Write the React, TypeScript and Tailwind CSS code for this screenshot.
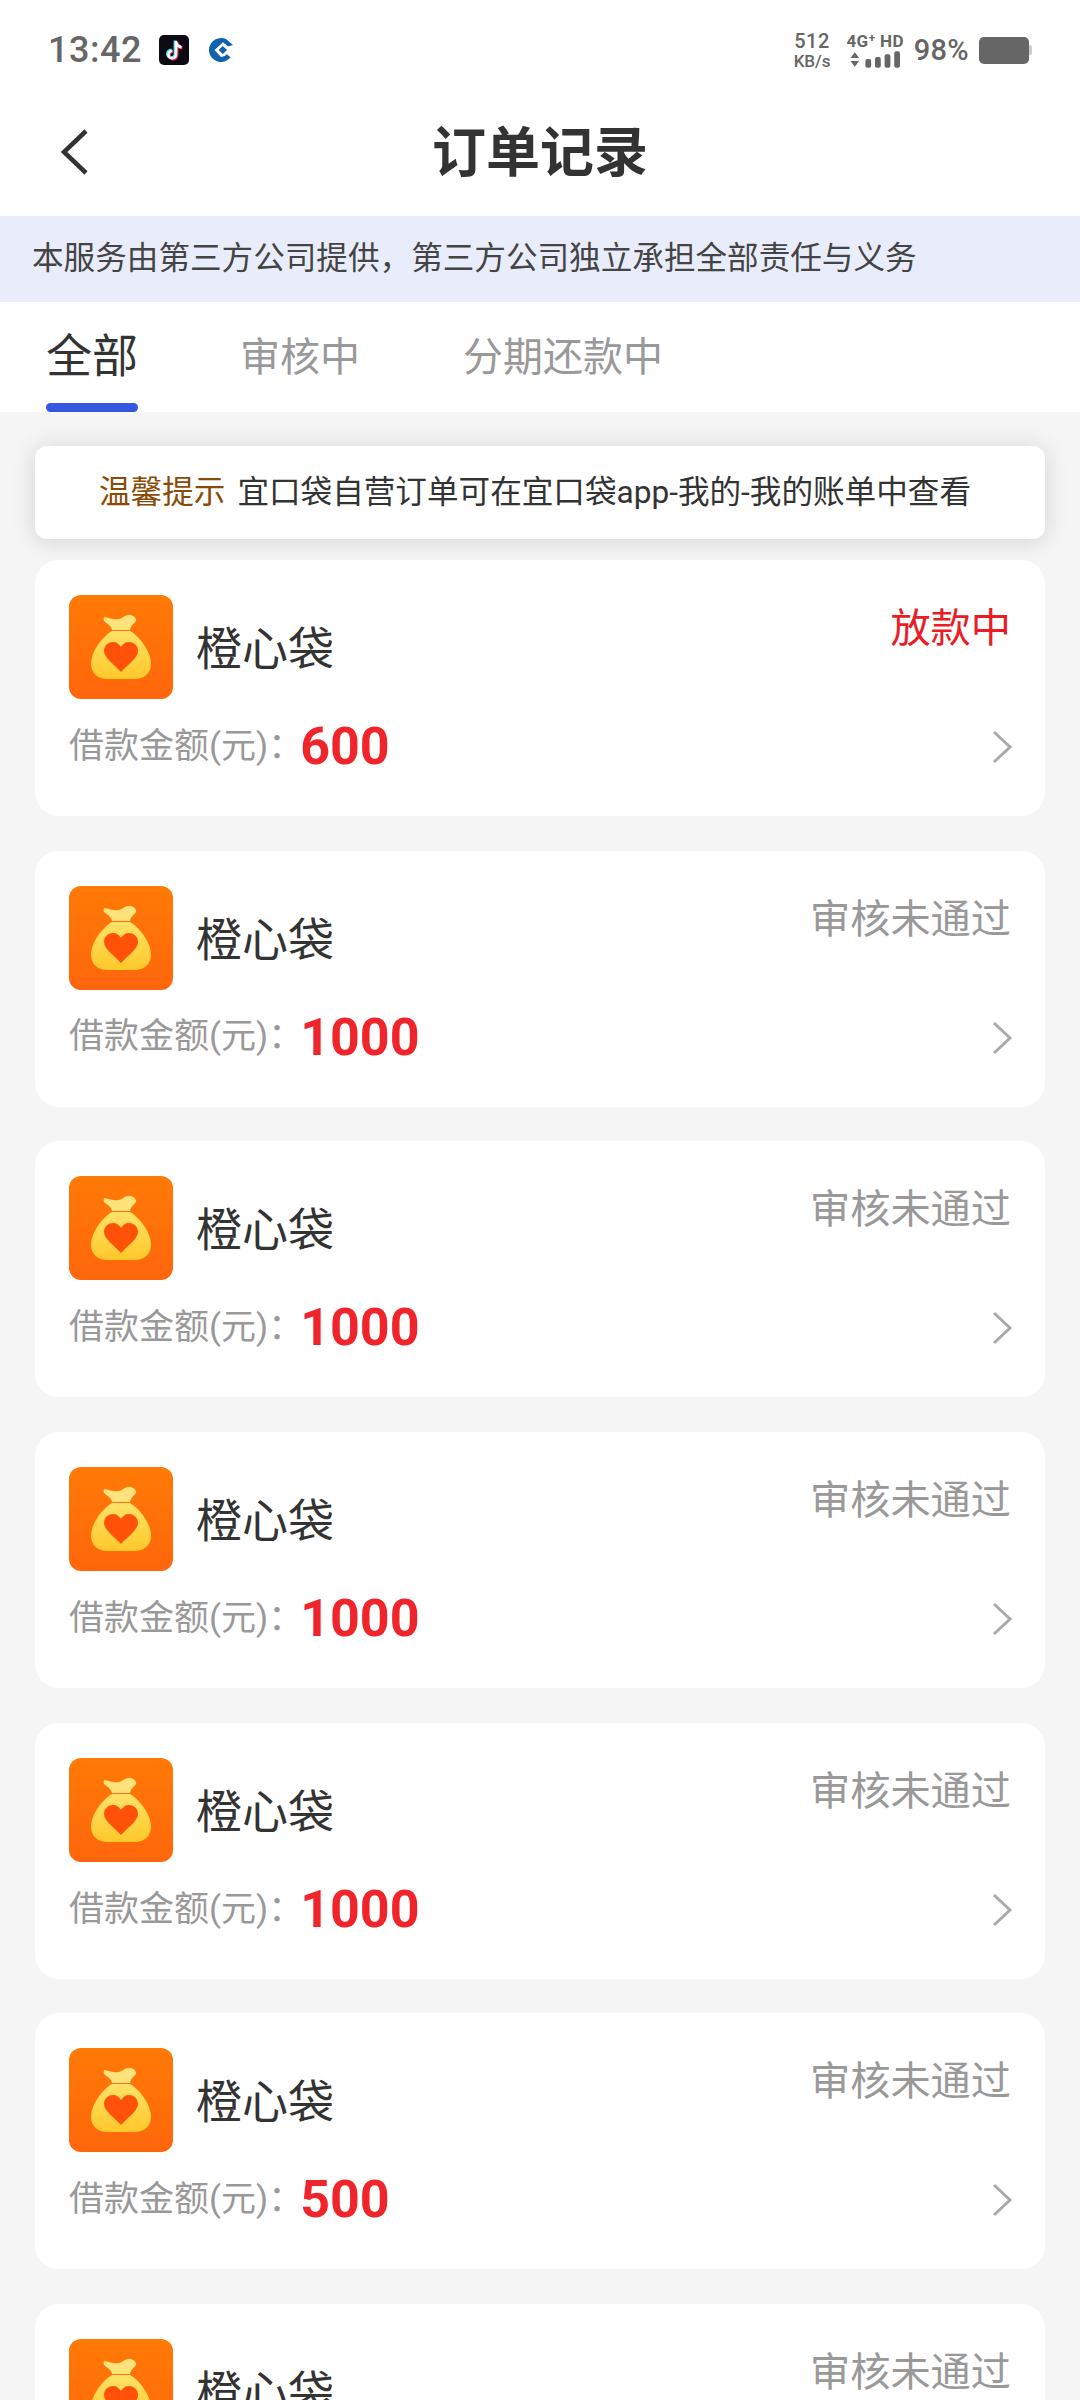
const orders = [
  { amount: "600", status: "放款中", pending: true },
  { amount: "1000", status: "审核未通过" },
  { amount: "1000", status: "审核未通过" },
  { amount: "1000", status: "审核未通过" },
  { amount: "1000", status: "审核未通过" },
  { amount: "500", status: "审核未通过" },
  { amount: "1000", status: "审核未通过" },
];

const cjk = "font-['Roboto','Noto_Sans_CJK_SC',sans-serif]";

function StatusBar() {
  return (
    <div className="flex h-[100px] items-center justify-between pl-[48px] pr-[48px] font-['Roboto',sans-serif] text-[#666]">
      <div className="flex items-center">
        <span className="text-[36px] font-medium leading-none tracking-[0.5px]">13:42</span>
        <svg className="ml-[17px]" width="30" height="30" viewBox="0 0 30 30">
          <rect width="30" height="30" rx="5" fill="#0d0a14" />
          <path d="M17 6v13.5a3.8 3.8 0 1 1-3.8-3.8M17 7c.6 3 2.6 4.8 5.5 5.2" fill="none" stroke="#25f4ee" strokeWidth="3.2" transform="translate(-.8 -.6)" />
          <path d="M17 6v13.5a3.8 3.8 0 1 1-3.8-3.8M17 7c.6 3 2.6 4.8 5.5 5.2" fill="none" stroke="#fe2c55" strokeWidth="3.2" transform="translate(.8 .6)" />
          <path d="M17 6v13.5a3.8 3.8 0 1 1-3.8-3.8M17 7c.6 3 2.6 4.8 5.5 5.2" fill="none" stroke="#fff" strokeWidth="2.6" />
        </svg>
        <svg className="ml-[19px]" width="26" height="24" viewBox="0 0 26 24">
          <path d="M13 0a12 12 0 1 0 9.5 19.3l-3.7-3.1A7 7 0 0 1 13 19l-6.5-7L15 4.2 20 8.5l5-1.5L18 1a12 12 0 0 0-5-1Z" fill="#0f62ae" />
          <path d="M14.8 8 10.6 12l4.2 4 4.2-4Z" fill="#0f62ae" />
        </svg>
      </div>
      <div className="flex items-center">
        <div className="flex flex-col items-center text-[17px] font-medium leading-[18px]">
          <span className="text-[20px] leading-[21px] tracking-[0.5px]">512</span>
          <span>KB/s</span>
        </div>
        <div className="ml-[16px] flex flex-col items-center">
          <span className="whitespace-nowrap text-[17px] font-bold leading-[19px] tracking-[0.3px]">4G⁺ HD</span>
          <svg width="50" height="17" viewBox="0 0 52 17" fill="#666">
            <path d="M5 1 9.5 7h-9ZM5 16 .5 10h9Z" />
            <rect x="16" y="8" width="6" height="9" rx="2" />
            <rect x="26" y="6" width="6" height="11" rx="2" />
            <rect x="36" y="3" width="6" height="14" rx="2" />
            <rect x="46" y="0" width="6" height="17" rx="2" />
          </svg>
        </div>
        <span className="ml-[10px] text-[29px] font-medium leading-none tracking-[0.3px]">98%</span>
        <div className="ml-[10px] flex items-center">
          <div className="h-[27px] w-[50px] rounded-[5px] bg-[#666]" />
          <div className="h-[10px] w-[3px] rounded-r-[2px] bg-[#ccc]" />
        </div>
      </div>
    </div>
  );
}

function BagIcon() {
  return (
    <div className="flex h-[104px] w-[104px] shrink-0 items-center justify-center rounded-[12px] bg-linear-to-b from-[#ff7a06] to-[#ff660c]">
      <svg width="60" height="66" viewBox="0 0 60 66">
        <defs>
          <linearGradient id="bagFill" x1="0" y1="0" x2="0" y2="1">
            <stop offset="0" stopColor="#ffe268" />
            <stop offset="1" stopColor="#ffc82a" />
          </linearGradient>
        </defs>
        <path d="M14 3c5 1 9 3 14 2 4-1 7-5 12-4 4 1 6 5 5 6-2 3-5 4-6 9H21c-1-5-5-6-8-9-1-2 0-4 1-4Z" fill="#ffe27a" />
        <path d="M21 17h18c9 5 21 20 21 33 0 10-8 15-16 15H16C8 65 0 60 0 50c0-13 12-28 21-33Z" fill="url(#bagFill)" />
        <path d="M30 58c-5-6-17-14-17-21 0-6 5-9 9-9 4 0 6 2 8 5 2-3 4-5 8-5 4 0 9 3 9 9 0 7-12 15-17 21Z" fill="#ff5208" />
      </svg>
    </div>
  );
}

function OrderCard({ amount, status, pending }: { amount: string; status: string; pending?: boolean }) {
  return (
    <div className="h-[256px] rounded-[24px] bg-white pl-[34px] pr-[34px] pt-[35px]">
      <div className="flex items-start">
        <BagIcon />
        <span className="ml-[23px] mt-[27px] text-[46px] leading-[54px] text-[#333]">橙心袋</span>
        <span className={`ml-auto mt-[6px] text-[40.2px] leading-[56px] ${pending ? "text-[#ec1c24]" : "text-[#999]"}`}>
          {status}
        </span>
      </div>
      <div className="mt-[18px] flex h-[60px] items-center">
        <span className="text-[35px] text-[#999]">借款金额(元)：</span>
        <span className="ml-[-3px] text-[52px] font-bold text-[#f0252b]">{amount}</span>
        <svg className="ml-auto mr-[-2px]" width="22" height="34" viewBox="0 0 22 34" fill="none">
          <path d="M3 2l16 15L3 32" stroke="#aaa" strokeWidth="3" />
        </svg>
      </div>
    </div>
  );
}

export default function App() {
  return (
    <div className={`h-[2400px] overflow-hidden bg-[#f5f5f5] ${cjk}`}>
      <div className="bg-white">
        <StatusBar />
        <div className="relative flex h-[116px] items-center justify-center">
          <svg className="absolute left-[58px] top-[28px]" width="32" height="48" viewBox="0 0 32 48" fill="none">
            <path d="M28 3 6 24l22 21" stroke="#333" strokeWidth="4.5" />
          </svg>
          <h1 className="mb-[8px] text-[54px] font-bold leading-none text-[#333]">订单记录</h1>
        </div>
      </div>
      <div className="flex h-[86px] items-center bg-[#e9edfb] pl-[32px] text-[31.6px] text-[#444]">
        本服务由第三方公司提供，第三方公司独立承担全部责任与义务
      </div>
      <div className="flex h-[110px] bg-white pl-[46px]">
        <div className="flex w-[92px] flex-col items-center justify-between">
          <span className="mt-[22px] text-[46px] leading-[64px] text-[#333]">全部</span>
          <div className="h-[9px] w-full rounded-full bg-[#3556e0]" />
        </div>
        <span className="ml-[102px] mt-[28px] text-[40px] leading-[56px] text-[#999]">审核中</span>
        <span className="ml-[103px] mt-[28px] text-[40px] leading-[56px] text-[#999]">分期还款中</span>
      </div>
      <div className="flex flex-col gap-[34.7px] px-[35px] pt-[34px]">
        <div className="mb-[-13.7px] flex h-[93px] items-center justify-center rounded-[12px] bg-white pr-[10px] text-[31.6px] text-[#333] shadow-[0_2px_24px_rgba(0,0,0,0.14)]">
          <span className="text-[#8a4b08]">温馨提示</span>
          <span className="ml-[12px]">宜口袋自营订单可在宜口袋app-我的-我的账单中查看</span>
        </div>
        {orders.map((order, i) => (
          <OrderCard key={i} amount={order.amount} status={order.status} pending={order.pending} />
        ))}
      </div>
    </div>
  );
}
